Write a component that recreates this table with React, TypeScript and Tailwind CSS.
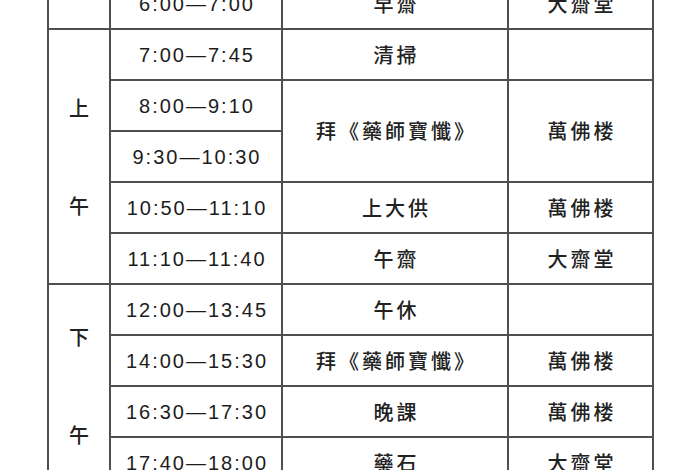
const cell = 'flex items-center justify-center bg-white';
const time = `${cell} pl-[2px] font-['Liberation_Sans',Arial,sans-serif] text-[20px] tracking-[2px] text-[#1c1c1c]`;
const han = `${cell} pl-[3px] font-['Noto_Sans_CJK_TC','Noto_Sans_CJK_SC',sans-serif] font-medium text-[20px] tracking-[3px] text-[#222]`;

function Side({ top, bottom, rows }: { top: string; bottom: string; rows: string }) {
  return (
    <div className={`${han} ${rows} flex-col gap-[78px] leading-none`}>
      <span>{top}</span>
      <span>{bottom}</span>
    </div>
  );
}

export default function App() {
  return (
    <div className="h-[470px] w-[700px] overflow-hidden bg-white">
      <div className="ml-[47px] mt-[-23px] grid w-[607px] grid-cols-[60px_170px_224px_143px] grid-rows-[repeat(10,49px)] gap-[2px] bg-[#4f4f4f] p-[2px]">
        {/* 早上 (cut off) */}
        <div className={cell} />
        <div className={time}>6:00—7:00</div>
        <div className={han}>早齋</div>
        <div className={han}>大齋堂</div>

        {/* 上午 */}
        <Side top="上" bottom="午" rows="row-span-5" />
        <div className={time}>7:00—7:45</div>
        <div className={han}>清掃</div>
        <div className={cell} />

        <div className={time}>8:00—9:10</div>
        <div className={`${han} row-span-2`}>拜《藥師寶懺》</div>
        <div className={`${han} row-span-2`}>萬佛楼</div>
        <div className={time}>9:30—10:30</div>

        <div className={time}>10:50—11:10</div>
        <div className={han}>上大供</div>
        <div className={han}>萬佛楼</div>

        <div className={time}>11:10—11:40</div>
        <div className={han}>午齋</div>
        <div className={han}>大齋堂</div>

        {/* 下午 */}
        <Side top="下" bottom="午" rows="row-span-4" />
        <div className={time}>12:00—13:45</div>
        <div className={han}>午休</div>
        <div className={cell} />

        <div className={time}>14:00—15:30</div>
        <div className={han}>拜《藥師寶懺》</div>
        <div className={han}>萬佛楼</div>

        <div className={time}>16:30—17:30</div>
        <div className={han}>晚課</div>
        <div className={han}>萬佛楼</div>

        <div className={time}>17:40—18:00</div>
        <div className={han}>藥石</div>
        <div className={han}>大齋堂</div>
      </div>
    </div>
  );
}
